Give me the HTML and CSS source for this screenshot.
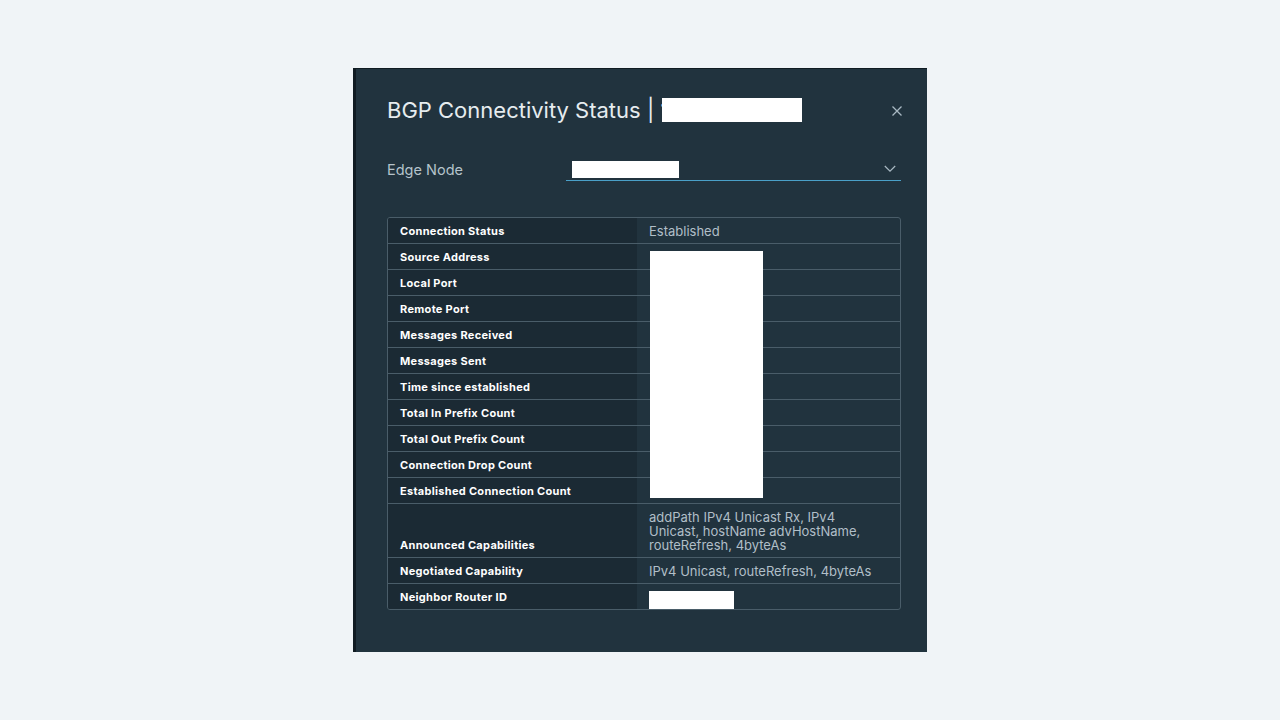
FILE: index.html
```html
<!DOCTYPE html>
<html>
<head>
<meta charset="utf-8">
<link rel="stylesheet" href="styles.css">
</head>
<body>
<div class="modal">
  <div class="header">
    <h1 class="title">BGP Connectivity Status | 1<span class="redact title-redact"></span></h1>
    <button class="close" aria-label="Close">
      <svg width="10" height="10" viewBox="0 0 10 10"><path d="M0.5 0.5 L9.5 9.5 M9.5 0.5 L0.5 9.5" stroke="#a9b9c3" stroke-width="1.3" fill="none"/></svg>
    </button>
  </div>
  <div class="field">
    <label class="field-label">Edge Node</label>
    <div class="select">
      <span class="redact select-redact"></span>
      <svg class="chevron" width="12" height="8" viewBox="0 0 12 8"><path d="M0.8 1 L6 6.2 L11.2 1" stroke="#a9b9c3" stroke-width="1.2" fill="none"/></svg>
    </div>
  </div>
  <div class="grid-wrap">
    <table class="grid">
      <tr><th>Connection Status</th><td>Established</td></tr>
      <tr><th>Source Address</th><td class="has-overlay"><span class="redact big-redact"></span></td></tr>
      <tr><th>Local Port</th><td></td></tr>
      <tr><th>Remote Port</th><td></td></tr>
      <tr><th>Messages Received</th><td></td></tr>
      <tr><th>Messages Sent</th><td></td></tr>
      <tr><th>Time since established</th><td></td></tr>
      <tr><th>Total In Prefix Count</th><td></td></tr>
      <tr><th>Total Out Prefix Count</th><td></td></tr>
      <tr><th>Connection Drop Count</th><td></td></tr>
      <tr><th>Established Connection Count</th><td></td></tr>
      <tr><th>Announced Capabilities</th><td>addPath IPv4 Unicast Rx, IPv4<br>Unicast, hostName advHostName,<br>routeRefresh, 4byteAs</td></tr>
      <tr><th>Negotiated Capability</th><td>IPv4 Unicast, routeRefresh, 4byteAs</td></tr>
      <tr class="last"><th>Neighbor Router ID</th><td class="rid"><span class="redact rid-redact"></span></td></tr>
    </table>
  </div>
</div>
</body>
</html>
```
FILE: styles.css
```css
html, body {
  margin: 0;
  padding: 0;
}
body {
  background: #f0f4f7;
  width: 1280px;
  height: 720px;
  display: flex;
  align-items: center;
  justify-content: center;
  font-family: Inter, "Noto Sans", sans-serif;
}
.modal {
  box-sizing: border-box;
  width: 574px;
  height: 584px;
  background: #21333e;
  border-left: 3px solid #101b22;
  border-top: 1px solid #101b22;
  padding: 25px 26px 0 31px;
  display: flex;
  flex-direction: column;
}
.header {
  display: flex;
  align-items: center;
  justify-content: space-between;
  height: 34px;
}
.title {
  margin: 0;
  font-size: 22px;
  font-weight: 400;
  color: #e6ecef;
  line-height: 28px;
  white-space: nowrap;
  display: flex;
  align-items: center;
  position: relative;
  top: -1px;
}
.redact {
  background: #ffffff;
  display: inline-block;
}
.title-redact {
  width: 140px;
  height: 24px;
  margin-left: -7px;
}
.close {
  background: none;
  border: 0;
  padding: 0;
  width: 10px;
  height: 10px;
  display: flex;
  position: relative;
  right: -1px;
}
.field {
  display: flex;
  align-items: center;
  margin-top: 29px;
  height: 24px;
}
.field-label {
  width: 179px;
  font-size: 14.5px;
  color: #b5c3cb;
}
.select {
  flex: 1;
  height: 23px;
  border-bottom: 1px solid #4aa0c8;
  display: flex;
  align-items: center;
  justify-content: space-between;
  padding: 0 6px;
  box-sizing: border-box;
}
.select-redact {
  width: 107px;
  height: 17px;
  margin-top: 2px;
}
.chevron {
  margin-right: -1px;
}
.grid-wrap {
  margin-top: 36px;
  border: 1px solid #4a5d69;
  border-radius: 3px;
  overflow: hidden;
}
.grid {
  width: 100%;
  border-collapse: collapse;
  table-layout: fixed;
}
.grid th, .grid td {
  padding: 6px 12px 5px;
  line-height: 14px;
  border-bottom: 1px solid #4a5d69;
  text-align: left;
}
.grid tr.last th, .grid tr.last td {
  border-bottom: 0;
}
.grid th {
  width: 225px;
  background: #1b2a34;
  color: #ffffff;
  font-size: 11px;
  font-weight: 700;
  letter-spacing: 0.3px;
  vertical-align: bottom;
}
.grid td {
  color: #b1bfc8;
  font-size: 13px;
  vertical-align: top;
  height: 14px;
}
.has-overlay {
  position: relative;
}
.big-redact {
  position: absolute;
  left: 13px;
  top: 7px;
  width: 113px;
  height: 247px;
}
.grid td.rid {
  padding: 7px 12px 0;
}
.rid-redact {
  display: block;
  width: 85px;
  height: 18px;
}
```
